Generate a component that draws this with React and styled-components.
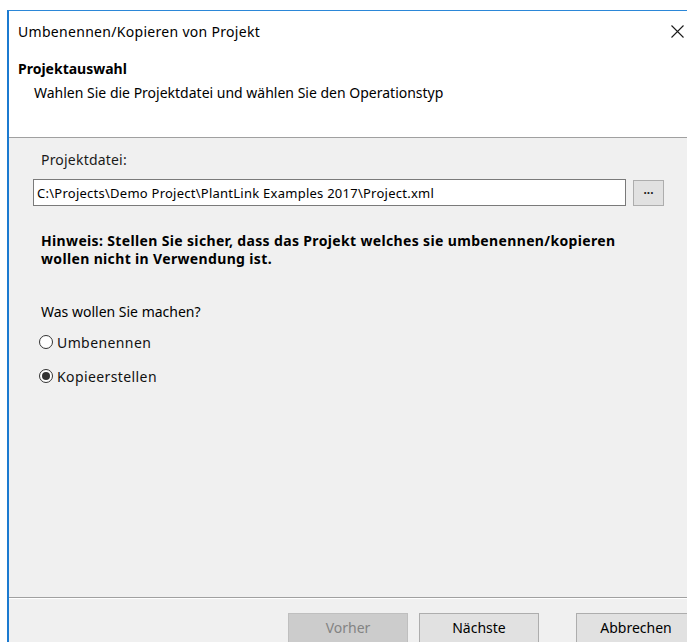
import React, { useState } from 'react';
import styled, { createGlobalStyle } from 'styled-components';

const GlobalStyle = createGlobalStyle`
  html, body {
    margin: 0;
    padding: 0;
    background: #ffffff;
    overflow: hidden;
  }
  body {
    font-family: 'Segoe UI', 'Noto Sans', 'Open Sans', sans-serif;
    color: #000;
  }
`;

export default function App() {
  const [mode, setMode] = useState('copy');
  const [path, setPath] = useState(
    'C:\\Projects\\Demo Project\\PlantLink Examples 2017\\Project.xml'
  );

  return (
    <>
      <GlobalStyle />
      <Window>
        <TitleBar>
          <Title>Umbenennen/Kopieren von Projekt</Title>
          <CloseButton aria-label="Schließen">
            <svg width="13" height="13" viewBox="0 0 13 13">
              <path d="M0.5 0.5 L12.5 12.5 M12.5 0.5 L0.5 12.5" stroke="#1a1a1a" strokeWidth="1.1" />
            </svg>
          </CloseButton>
        </TitleBar>

        <Header>
          <HeaderTitle>Projektauswahl</HeaderTitle>
          <HeaderText>Wahlen Sie die Projektdatei und wählen Sie den Operationstyp</HeaderText>
        </Header>

        <Body>
          <FieldLabel>Projektdatei:</FieldLabel>
          <FileRow>
            <PathInput value={path} onChange={(e) => setPath(e.target.value)} />
            <BrowseButton>...</BrowseButton>
          </FileRow>

          <Notice>
            <NoticeLine>Hinweis: Stellen Sie sicher, dass das Projekt welches sie umbenennen/kopieren</NoticeLine>
            <NoticeLine>wollen nicht in Verwendung ist.</NoticeLine>
          </Notice>

          <Question>Was wollen Sie machen?</Question>
          <RadioGroup>
            <RadioRow onClick={() => setMode('rename')}>
              <RadioDot checked={mode === 'rename'} />
              <RadioLabel>Umbenennen</RadioLabel>
            </RadioRow>
            <RadioRow onClick={() => setMode('copy')}>
              <RadioDot checked={mode === 'copy'} />
              <RadioLabel>Kopieerstellen</RadioLabel>
            </RadioRow>
          </RadioGroup>
        </Body>

        <Footer>
          <DialogButton disabled>Vorher</DialogButton>
          <DialogButton>Nächste</DialogButton>
          <DialogButton cancel>Abbrechen</DialogButton>
        </Footer>
      </Window>
    </>
  );
}

const Window = styled.div`
  margin: 10px 0 0 7px;
  width: 700px;
  height: 632px;
  border-top: 1px solid #2b87d8;
  border-left: 2px solid #1b7ad0;
  display: flex;
  flex-direction: column;
  overflow: hidden;
  background: #f0f0f0;
`;

const TitleBar = styled.div`
  height: 43px;
  flex: none;
  display: flex;
  align-items: center;
  padding-left: 9px;
  background: #fff;
  position: relative;
`;

const Title = styled.div`
  font-size: 14px;
  color: #000;
  padding-bottom: 2px;
  letter-spacing: 0.3px;
`;

const CloseButton = styled.div`
  position: absolute;
  left: 662px;
  top: 14px;
  width: 13px;
  height: 13px;
  display: flex;
`;

const Header = styled.div`
  height: 84px;
  flex: none;
  background: #fff;
  border-bottom: 1px solid #a0a0a0;
  padding-left: 9px;
  box-sizing: border-box;
`;

const HeaderTitle = styled.div`
  font-size: 14px;
  font-weight: bold;
  line-height: 18px;
  padding-top: 6px;
`;

const HeaderText = styled.div`
  font-size: 14px;
  line-height: 18px;
  padding: 6px 0 0 16px;
`;

const Body = styled.div`
  flex: 1;
  padding: 13px 0 0 24px;
  border-bottom: 1px solid #a0a0a0;
  box-shadow: 0 1px 0 #fff;
`;

const FieldLabel = styled.div`
  font-size: 14px;
  line-height: 18px;
  color: #1a1a1a;
  padding-left: 8px;
  letter-spacing: 0.2px;
`;

const FileRow = styled.div`
  display: flex;
  align-items: center;
  gap: 7px;
  margin-top: 10px;
`;

const PathInput = styled.input`
  width: 593px;
  height: 27px;
  box-sizing: border-box;
  border: 1px solid #7a7a7a;
  background: #fff;
  padding: 0 3px;
  font-family: 'Segoe UI', 'Noto Sans', sans-serif;
  font-size: 13px;
  color: #000;
  letter-spacing: 0.25px;
  outline: none;
`;

const BrowseButton = styled.button`
  width: 31px;
  height: 26px;
  border: 1px solid #adadad;
  background: #e1e1e1;
  font-size: 12px;
  font-weight: bold;
  color: #222;
  padding: 0 0 5px;
  line-height: 1;
`;

const Notice = styled.div`
  margin-top: 26px;
  padding-left: 8px;
  display: flex;
  flex-direction: column;
`;

const NoticeLine = styled.div`
  font-size: 14px;
  font-weight: bold;
  line-height: 18px;
  height: 18px;
  letter-spacing: 0.35px;
  white-space: nowrap;
`;

const Question = styled.div`
  font-size: 14px;
  line-height: 18px;
  margin-top: 35px;
  padding-left: 8px;
`;

const RadioGroup = styled.div`
  display: flex;
  flex-direction: column;
  gap: 16px;
  margin-top: 12px;
  padding-left: 6px;
`;

const RadioRow = styled.label`
  display: flex;
  align-items: center;
  gap: 4px;
  cursor: pointer;
  height: 18px;
`;

const RadioDot = styled.span`
  width: 14px;
  height: 14px;
  box-sizing: border-box;
  border-radius: 50%;
  border: 1px solid #333;
  background: #fff;
  display: flex;
  align-items: center;
  justify-content: center;

  &::after {
    content: '';
    width: 8px;
    height: 8px;
    border-radius: 50%;
    background: #333;
    display: ${(props) => (props.checked ? 'block' : 'none')};
  }
`;

const RadioLabel = styled.span`
  font-size: 14px;
  letter-spacing: 0.4px;
  color: #111;
`;

const Footer = styled.div`
  height: 45px;
  flex: none;
  display: flex;
  align-items: flex-start;
  padding: 15px 0 0 279px;
  box-sizing: border-box;
`;

const DialogButton = styled.button`
  flex: none;
  width: 120px;
  height: 34px;
  margin-left: ${(props) => (props.cancel ? '26px' : '0')};
  margin-right: 11px;
  border: 1px solid ${(props) => (props.disabled ? '#bfbfbf' : '#adadad')};
  background: ${(props) => (props.disabled ? '#cccccc' : '#e1e1e1')};
  color: ${(props) => (props.disabled ? '#838383' : '#000')};
  font-family: 'Segoe UI', 'Noto Sans', sans-serif;
  font-size: 14px;
  padding: 0 0 6px;
`;
